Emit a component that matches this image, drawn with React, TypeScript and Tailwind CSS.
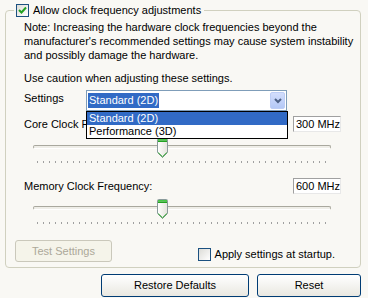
import React from 'react';

const ticks = Array.from({ length: 49 }, (_, i) => i);

const CheckBox: React.FC<{ checked?: boolean }> = ({ checked }) => (
  <div className="w-[13px] h-[13px] border border-[#1c5180] bg-gradient-to-br from-[#dcdcd7] to-white flex items-center justify-center shrink-0">
    {checked && (
      <svg width="9" height="9" viewBox="0 0 9 9">
        <path d="M1 4 L3.5 6.5 L8 1.5" fill="none" stroke="#21a121" strokeWidth="2" />
      </svg>
    )}
  </div>
);

const Thumb: React.FC = () => (
  <svg width="11" height="21" viewBox="0 0 11 21">
    <defs>
      <linearGradient id="tg" x1="0" y1="0" x2="1" y2="0">
        <stop offset="0" stopColor="#ffffff" />
        <stop offset="1" stopColor="#e4e3dc" />
      </linearGradient>
    </defs>
    <path d="M1.5 0.5 H9.5 Q10.5 0.5 10.5 1.5 V14.5 L5.5 19.5 L0.5 14.5 V1.5 Q0.5 0.5 1.5 0.5 Z" fill="url(#tg)" stroke="#8a9b9b" />
    <rect x="1" y="1" width="9" height="1.5" fill="#47c747" />
    <rect x="1" y="2.5" width="9" height="1.5" fill="#21a121" />
    <path d="M1.2 14.6 L5.5 18.8 L9.8 14.6" fill="none" stroke="#21a121" strokeWidth="1" />
  </svg>
);

const Slider: React.FC = () => (
  <div className="relative h-[26px]">
    <div className="absolute left-[9px] right-[10px] top-[7px] h-[4px] rounded-[2px] border border-[#a9a89e] border-b-white bg-[#efeee8]" />
    <div className="absolute left-[133px] top-0">
      <Thumb />
    </div>
    <div className="absolute left-[13px] top-[23px] flex gap-[5px]">
      {ticks.map((t) => (
        <span key={t} className="block w-px h-[2px] bg-[#a0a0a0]" />
      ))}
    </div>
  </div>
);

const ValueBox: React.FC<{ value: string }> = ({ value }) => (
  <div className="w-[48px] h-[16px] shrink-0 whitespace-nowrap border border-[#a0a0a0] border-r-[#e8e8e8] border-b-[#e8e8e8] bg-white pl-[2px] leading-[14px]">
    {value}
  </div>
);

export default function App() {
  return (
    <div className="w-[368px] h-[298px] overflow-hidden bg-[#f9f8f4] pt-[10px] pl-[5px] text-[11px] text-black font-['Liberation_Sans',Arial,sans-serif]">
      <div className="relative w-[356px] h-[258px] border border-[#d0d0bf] rounded-[4px] pl-[18px] pr-[19px] pt-[9px]">
        <div className="absolute left-[8px] -top-[7px] flex items-center gap-[4px] pl-[2px] pr-[3px] bg-[#f9f8f4] h-[13px]">
          <CheckBox checked />
          <span className="leading-[13px]">Allow clock frequency adjustments</span>
        </div>

        <p className="leading-[14px] whitespace-nowrap">
          Note: Increasing the hardware clock frequencies beyond the
          <br />
          manufacturer's recommended settings may cause system instability
          <br />
          and possibly damage the hardware.
        </p>
        <p className="leading-[14px] mt-[9px]">Use caution when adjusting these settings.</p>

        <div className="flex mt-[5px]">
          <span className="w-[62px] leading-[14px] pt-[1px]">Settings</span>
          <div className="relative w-[201px] h-[21px] border border-[#7f9db9] bg-white flex items-center pl-[1px]">
            <span className="bg-[#316ac5] text-white leading-[15px] px-[1px]">Standard (2D)</span>
            <div className="ml-auto mr-px w-[15px] h-[17px] rounded-[2px] border border-[#bdcdf5] bg-gradient-to-b from-[#d3defc] to-[#b4c8f6] flex items-center justify-center">
              <svg width="8" height="6" viewBox="0 0 8 6">
                <path d="M1 1 L4 4 L7 1" fill="none" stroke="#4d6185" strokeWidth="2" />
              </svg>
            </div>
            <div className="absolute left-[-1px] top-[20px] w-[202px] border border-black bg-white z-10">
              <div className="bg-[#316ac5] text-white leading-[13px] pl-[2px]">Standard (2D)</div>
              <div className="leading-[13px] pl-[2px]">Performance (3D)</div>
            </div>
          </div>
        </div>

        <div className="flex items-center justify-between mt-[5px]">
          <span className="w-[62px] overflow-hidden whitespace-nowrap leading-[14px]">Core Clock Frequency:</span>
          <ValueBox value="300 MHz" />
        </div>
        <div className="mt-[6px]">
          <Slider />
        </div>

        <div className="flex items-center justify-between mt-[14px]">
          <span className="leading-[14px]">Memory Clock Frequency:</span>
          <ValueBox value="600 MHz" />
        </div>
        <div className="mt-[5px]">
          <Slider />
        </div>

        <div className="flex items-start mt-[15px] -ml-[9px]">
          <div className="w-[97px] h-[22px] rounded-[3px] border border-[#cac8bb] bg-[#f5f4ea] text-[#aca899] flex items-center justify-center">
            Test Settings
          </div>
          <div className="ml-auto mt-[8px] flex items-center gap-[4px] mr-[6px]">
            <CheckBox />
            <span className="leading-[13px]">Apply settings at startup.</span>
          </div>
        </div>
      </div>

      <div className="w-[356px] flex justify-end gap-[8px] mt-[6px]">
        <div className="w-[148px] h-[23px] rounded-[3px] border border-[#003c74] bg-gradient-to-b from-white to-[#e9e8e1] flex items-center justify-center">
          Restore Defaults
        </div>
        <div className="w-[104px] h-[23px] rounded-[3px] border border-[#003c74] bg-gradient-to-b from-white to-[#e9e8e1] flex items-center justify-center">
          Reset
        </div>
      </div>
    </div>
  );
}
